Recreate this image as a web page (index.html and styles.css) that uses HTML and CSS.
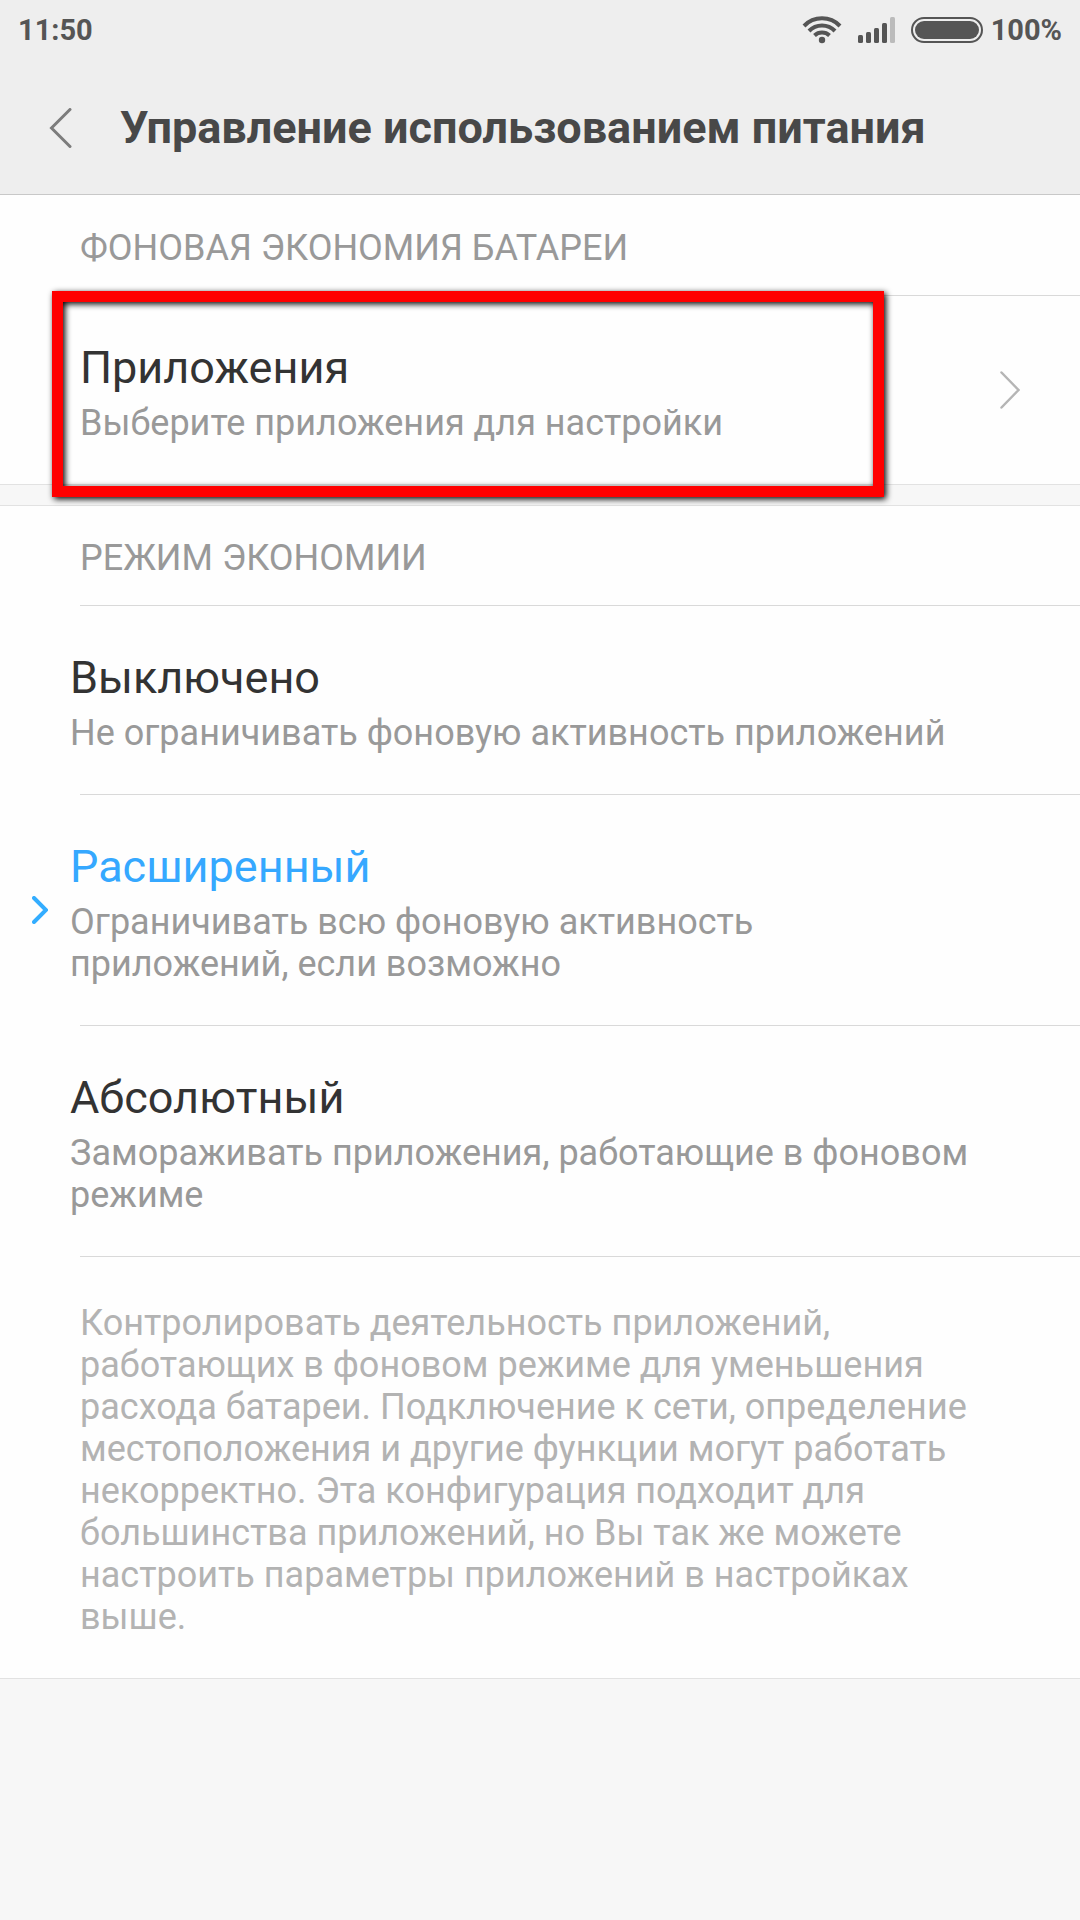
FILE: index.html
```html
<!DOCTYPE html>
<html lang="ru">

<head>
    <meta charset="UTF-8">
    <meta name="viewport" content="width=device-width, initial-scale=1">
    <title>Управление использованием питания</title>
    <link rel="stylesheet" href="styles.css">
</head>

<body>

    <header class="header">
        <div class="status-bar">
            <span>11:50</span>
            <div class="status-icons">
                <svg width="40" height="28" viewBox="0 0 40 28" fill="none" stroke="#555" stroke-width="4">
                    <path d="M2 10A25 25 0 0 1 38 10" />
                    <path d="M7 15A18 18 0 0 1 33 15" />
                    <path d="M12.500 19.500A11 11 0 0 1 27.500 19.500" />
                    <circle cx="20" cy="24" r="3.200" fill="#555" stroke="none" />
                </svg>
                <svg width="37" height="28" viewBox="0 0 37 28" fill="#555">
                    <rect x="0" y="19" width="5" height="8" rx="1.500" />
                    <rect x="8" y="16" width="5" height="11" rx="1.500" />
                    <rect x="16" y="12" width="5" height="15" rx="1.500" />
                    <rect x="24" y="7" width="5" height="20" rx="1.500" />
                    <rect x="32" y="1" width="5" height="26" rx="1.500" fill="#bbb" />
                </svg>
                <svg width="72" height="28" viewBox="0 0 72 28">
                    <rect x="1" y="2" width="70" height="24" rx="12" fill="none" stroke="#555" stroke-width="2" />
                    <rect x="4" y="5" width="64" height="18" rx="9" fill="#555" />
                </svg>
                <span>100%</span>
            </div>
        </div>
        <div class="title-bar">
            <button class="back-btn" type="button" aria-label="Назад">
                <svg width="24" height="40" viewBox="0 0 24 40" fill="none" stroke="#7c7c7c" stroke-width="3" stroke-linecap="round">
                    <path d="M22 1.500L3.500 20L22 38.500" />
                </svg>
            </button>
            <h1>Управление использованием питания</h1>
        </div>
    </header>

    <main>
        <section class="group">
            <h2 class="group-title">ФОНОВАЯ ЭКОНОМИЯ БАТАРЕИ</h2>
            <div class="divider"></div>
            <a class="row row-link" href="#">
                <span class="row-text">
                    <span class="row-title">Приложения</span>
                    <span class="row-desc">Выберите приложения для настройки</span>
                </span>
                <svg width="20" height="38" viewBox="0 0 20 38" fill="none" stroke="#b5b5b5" stroke-width="2.500" stroke-linecap="round">
                    <path d="M1.500 1.500L18.500 19L1.500 36.500" />
                </svg>
                <span class="highlight"></span>
            </a>
        </section>

        <section class="group">
            <h2 class="group-title">РЕЖИМ ЭКОНОМИИ</h2>
            <div class="divider"></div>
            <label class="row row-option">
                <input type="radio" name="mode">
                <svg class="marker" width="16" height="28" viewBox="0 0 16 28">
                    <path d="M2 2L14 14L2 26" />
                </svg>
                <span class="row-text">
                    <span class="row-title">Выключено</span>
                    <span class="row-desc">Не ограничивать фоновую активность приложений</span>
                </span>
            </label>
            <div class="divider"></div>
            <label class="row row-option">
                <input type="radio" name="mode" checked>
                <svg class="marker" width="16" height="28" viewBox="0 0 16 28">
                    <path d="M2 2L14 14L2 26" />
                </svg>
                <span class="row-text">
                    <span class="row-title">Расширенный</span>
                    <span class="row-desc">Ограничивать всю фоновую активность приложений, если возможно</span>
                </span>
            </label>
            <div class="divider"></div>
            <label class="row row-option">
                <input type="radio" name="mode">
                <svg class="marker" width="16" height="28" viewBox="0 0 16 28">
                    <path d="M2 2L14 14L2 26" />
                </svg>
                <span class="row-text">
                    <span class="row-title">Абсолютный</span>
                    <span class="row-desc">Замораживать приложения, работающие в фоновом режиме</span>
                </span>
            </label>
            <div class="divider"></div>
            <p class="note">Контролировать деятельность приложений, работающих в фоновом режиме для уменьшения расхода батареи. Подключение к сети, определение местоположения и другие функции могут работать некорректно. Эта конфигурация подходит для большинства приложений, но Вы так же можете настроить параметры приложений в настройках выше.</p>
        </section>
    </main>

</body>

</html>
```
FILE: styles.css
```css
* {
    box-sizing: border-box;
}

body {
    margin: 0;
    font-family: Roboto, sans-serif;
    font-size: 36px;
    line-height: 42px;
    color: #333;
    background: #f7f7f7;
}

h1,
h2,
p {
    margin: 0;
}

svg {
    display: block;
    flex-shrink: 0;
}

/* header */
.header {
    background: #eee;
    border-bottom: 1px solid #c8c8c8;
}

.status-bar {
    display: flex;
    justify-content: space-between;
    align-items: center;
    height: 60px;
    padding: 0 18px;
    font-size: 29px;
    font-weight: bold;
    color: #555;
}

.status-icons {
    display: flex;
    align-items: center;
    gap: 16px;
}

.status-icons span {
    margin-left: -8px;
}

.title-bar {
    display: flex;
    align-items: center;
    height: 134px;
    padding: 2px 48px 0;
    gap: 48px;
}

.title-bar h1 {
    font-size: 45px;
    line-height: 54px;
    color: #484848;
}

.back-btn {
    padding: 0;
    border: none;
    background: none;
    cursor: pointer;
}

/* groups */
.group {
    background: #fefefe;
    border: solid #e2e2e2;
    border-width: 1px 0;
}

.group:first-child {
    border-top-color: #fefefe;
}

.group + .group {
    margin-top: 20px;
}

.group-title {
    padding: 31px 80px 26px;
    font-size: 36px;
    font-weight: normal;
    color: #999;
}

.divider {
    height: 1px;
    margin-left: 80px;
    background: #d9d9d9;
}

.row {
    position: relative;
    display: flex;
    align-items: center;
    color: #333;
    text-decoration: none;
    cursor: pointer;
}

.row-link {
    padding: 0 60px 0 80px;
}

.row-option {
    padding: 0 100px 0 32px;
    gap: 22px;
}

.row-text {
    display: flex;
    flex: 1;
    flex-direction: column;
    gap: 7px;
    padding: 45px 0 40px;
}

.row-title {
    font-size: 45px;
    line-height: 54px;
}

.row-desc {
    color: #999;
}

.row-option input {
    position: absolute;
    margin: 0;
    opacity: 0;
}

.marker {
    visibility: hidden;
    fill: none;
    stroke: #33adff;
    stroke-width: 4;
    stroke-linecap: round;
}

.row-option input:checked ~ .marker {
    visibility: visible;
}

.row-option input:checked ~ .row-text .row-title {
    color: #35a8ff;
}

.note {
    padding: 45px 100px 40px 80px;
    color: #b3b3b3;
}

/* red frame around the row to tap */
.highlight {
    position: absolute;
    top: -5px;
    right: 196px;
    bottom: -13px;
    left: 52px;
    z-index: 1;
    border: 11px solid #f00;
    filter: drop-shadow(2px 2px 3px #000);
    pointer-events: none;
}
```
